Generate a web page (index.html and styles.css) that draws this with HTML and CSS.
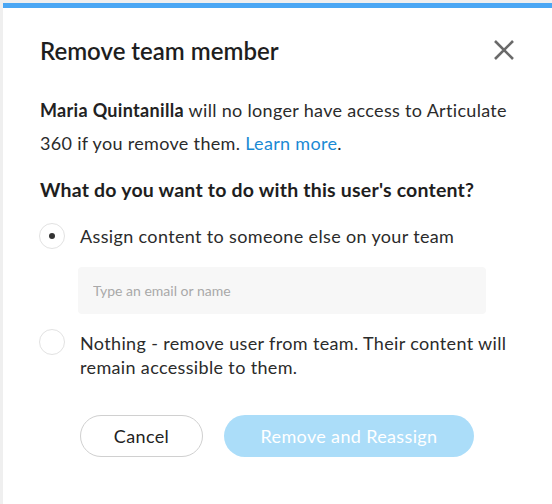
FILE: index.html
```html
<!DOCTYPE html>
<html>
<head>
<meta charset="utf-8">
<link rel="stylesheet" href="styles.css">
</head>
<body>
<div class="dialog">
  <div class="header">
    <h1 class="title">Remove team member</h1>
    <button class="close" aria-label="Close">
      <svg width="22" height="22" viewBox="0 0 22 22"><path d="M2 2 L20 20 M20 2 L2 20" stroke="#6a6a6a" stroke-width="2.6" stroke-linecap="butt" fill="none"/></svg>
    </button>
  </div>
  <p class="intro"><strong>Maria Quintanilla</strong> will no longer have access to Articulate 360 if you remove them. <a href="#" class="link">Learn more</a>.</p>
  <h2 class="question">What do you want to do with this user's content?</h2>
  <div class="options">
    <label class="option">
      <span class="radio checked"><span class="dot"></span></span>
      <span class="opt-text">Assign content to someone else on your team</span>
    </label>
    <div class="field">
      <input class="input" type="text" placeholder="Type an email or name">
    </div>
    <label class="option option-2">
      <span class="radio"></span>
      <span class="opt-text">Nothing - remove user from team. Their content will remain accessible to them.</span>
    </label>
  </div>
  <div class="actions">
    <button class="btn btn-cancel">Cancel</button>
    <button class="btn btn-primary">Remove and Reassign</button>
  </div>
</div>
</body>
</html>
```
FILE: styles.css
```css
* { box-sizing: border-box; }
html, body { margin: 0; padding: 0; }
body {
  background: #efefef;
  font-family: Lato, "Open Sans", sans-serif;
  color: #222;
  width: 552px;
  height: 504px;
  overflow: hidden;
  padding: 3px 0 0 3px;
}
.dialog {
  background: #fff;
  border-top: 5px solid #4aa7f4;
  height: 501px;
  padding: 0 0 0 37px;
}
.header {
  display: flex;
  align-items: center;
  justify-content: space-between;
  height: 84px;
  padding-right: 37px;
}
.title {
  margin: 0;
  font-size: 24px;
  font-weight: 600;
  color: #1e1e1e;
}
.close {
  border: 0;
  background: none;
  padding: 0;
  width: 22px;
  height: 22px;
  display: flex;
}
.intro {
  margin: 2px 0 0;
  font-size: 18px;
  letter-spacing: 0.32px;
  line-height: 33px;
  color: #2b2b2b;
  width: 485px;
}
.intro strong { font-weight: 700; color: #222; }
.link { color: #1a8ad4; text-decoration: none; }
.question {
  margin: 17px 0 0;
  font-size: 19.5px;
  letter-spacing: 0.2px;
  font-weight: 700;
  color: #1e1e1e;
  line-height: 26px;
}
.options { margin-top: 20px; }
.option {
  display: flex;
  align-items: flex-start;
  gap: 15px;
  margin-left: -1px;
}
.radio {
  flex: none;
  width: 26px;
  height: 26px;
  border-radius: 50%;
  border: 1.5px solid #e2e2e2;
  display: flex;
  align-items: center;
  justify-content: center;
}
.dot {
  width: 6px;
  height: 6px;
  border-radius: 50%;
  background: #333;
}
.opt-text {
  font-size: 18px;
  letter-spacing: 0.35px;
  line-height: 26px;
  color: #2b2b2b;
  width: 445px;
}
.field {
  padding: 18px 0 0 38px;
}
.input {
  display: block;
  width: 408px;
  height: 47px;
  border: 0;
  border-radius: 4px;
  background: #f7f7f7;
  padding: 0 15px;
  font-family: Lato, "Open Sans", sans-serif;
  font-size: 14px;
  color: #333;
  outline: none;
}
.input::placeholder { color: #a9a9a9; }
.option-2 { margin-top: 17px; }
.option-2 .opt-text { line-height: 24px; }
.option-2 .radio { margin-top: -2px; }
.actions {
  display: flex;
  gap: 21px;
  margin: 36px 0 0 40px;
}
.btn {
  height: 42px;
  border-radius: 21px;
  font-family: Lato, "Open Sans", sans-serif;
  font-size: 18px;
  letter-spacing: 0.35px;
  padding: 0;
}
.btn-cancel {
  width: 123px;
  background: #fff;
  border: 1.5px solid #d0d0d0;
  color: #222;
}
.btn-primary {
  width: 250px;
  background: #abddf9;
  border: 0;
  color: #fff;
}
```
